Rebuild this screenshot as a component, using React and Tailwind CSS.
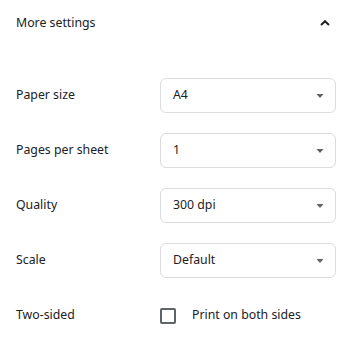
const rows = [
  { label: "Paper size", value: "A4" },
  { label: "Pages per sheet", value: "1" },
  { label: "Quality", value: "300 dpi" },
  { label: "Scale", value: "Default" },
];

function Select({ value }) {
  return (
    <div className="flex h-[35px] w-[176px] items-center justify-between rounded-[6px] border border-[#dadce0] pl-3 pr-[10px]">
      <span>{value}</span>
      <svg width="8" height="4" viewBox="0 0 8 4" className="mr-[1px]">
        <path d="M0.5 0 L7.5 0 L4 4 Z" fill="#5f6368" />
      </svg>
    </div>
  );
}

export default function App() {
  return (
    <div className="h-[345px] w-[351px] bg-white text-[12.3px] text-[#202124]" style={{ fontFamily: '"Noto Sans", sans-serif' }}>
      <div className="flex h-[46px] items-center justify-between pl-4 pr-[21px]">
        <span>More settings</span>
        <svg width="10" height="6" viewBox="0 0 10 6">
          <path d="M1 5 L5 1.2 L9 5" fill="none" stroke="#202124" strokeWidth="2" />
        </svg>
      </div>
      <div className="flex flex-col gap-5 pt-8 pl-4">
        {rows.map((r) => (
          <div key={r.label} className="flex h-[35px] items-center">
            <span className="w-[144px]">{r.label}</span>
            <Select value={r.value} />
          </div>
        ))}
        <div className="flex h-[35px] items-center">
          <span className="w-[144px]">Two-sided</span>
          <div className="h-4 w-4 rounded-[2px] border-2 border-[#5f6368]" />
          <span className="ml-4">Print on both sides</span>
        </div>
      </div>
    </div>
  );
}
